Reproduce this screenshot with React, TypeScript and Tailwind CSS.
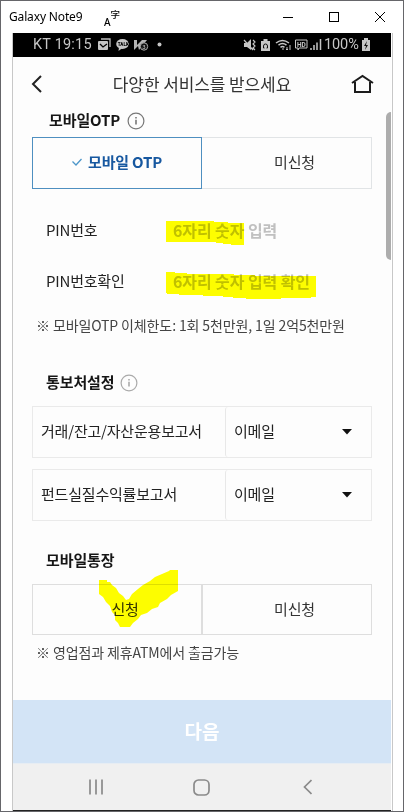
import type { ReactNode } from "react";

const reports = ["거래/잔고/자산운용보고서", "펀드실질수익률보고서"];

function InfoIcon({ className }: { className: string }) {
  return (
    <svg width="18" height="18" viewBox="0 0 18 18" className={className} fill="none">
      <circle cx="9" cy="9" r="7.9" stroke="currentColor" strokeWidth="1.2" />
      <path d="M9 7.8v4.8M9 5v1.5" stroke="currentColor" strokeWidth="1.6" />
    </svg>
  );
}

function TitleBar() {
  return (
    <div className="flex h-8 shrink-0 items-center bg-white pl-2 text-black">
      <span className="w-[95px] whitespace-nowrap font-['Noto_Sans','Noto_Sans_CJK_KR',sans-serif] text-[12px] tracking-[-0.15px]">
        Galaxy Note9
      </span>
      <span className="flex w-5 items-center">
        <span className="mt-[9px] font-['Noto_Sans',sans-serif] text-[10px] font-medium leading-none">A</span>
        <span className="mb-[5px] font-['Noto_Sans_CJK_KR',sans-serif] text-[9.5px] font-medium leading-none">
          字
        </span>
      </span>
      <svg width="105" height="12" viewBox="0 0 105 12" className="ml-auto mr-[16px]" fill="none" stroke="#000">
        <path d="M1 6.5h10" />
        <rect x="47.5" y="1.5" width="9" height="9" />
        <path d="M93 1l10 10M103 1L93 11" />
      </svg>
    </div>
  );
}

function StatusBar() {
  return (
    <div className="flex h-6 shrink-0 items-center bg-black pl-5 font-['Roboto',sans-serif] text-[14.5px] text-[#c6c6c6]">
      <span className="w-[64px] whitespace-nowrap pt-px tracking-[0.2px]">KT 19:15</span>
      <svg width="70" height="16" viewBox="0 0 70 16" fill="none">
        <path d="M4 2h9v8" stroke="#bdbdbd" strokeWidth="1.3" />
        <rect x="1" y="4" width="10" height="9" rx="1" fill="#c6c6c6" />
        <path d="M3 7l3 3 4-3" stroke="#000" strokeWidth="1.3" />
        <ellipse cx="25.5" cy="7" rx="6.3" ry="5" fill="#c6c6c6" />
        <path d="M22 10l-.5 4 4-3z" fill="#c6c6c6" />
        <text x="20.8" y="8.7" fontSize="4.5" fontWeight="900" fill="#000">
          TALK
        </text>
        <path d="M37 3h3v5l5-5h5l-8 10-1-4-4 4z" fill="#b5b5b5" />
        <circle cx="47" cy="9.5" r="3.7" fill="#111" stroke="#aaa" />
        <text x="45.3" y="12" fontSize="6" fill="#ccc">
          3
        </text>
        <circle cx="62.5" cy="7.5" r="2" fill="#c6c6c6" />
      </svg>
      <svg width="80" height="16" viewBox="0 0 80 16" className="ml-auto" fill="none" stroke="#c6c6c6">
        <path d="M1 6h3l4-4v11L4 10H1z" fill="#c6c6c6" stroke="none" />
        <path d="M1 3l9 10M10 3l2 2-2 2 2 2-2 2 2 2" strokeWidth="1.2" />
        <path d="M18 4h2.500V2h4v2H27v10h-9z" fill="#c6c6c6" stroke="none" />
        <path d="M20.500 11V9a2 2 0 014 0v2M20.500 11h1M23.500 11h1" stroke="#111" />
        <path d="M33 6q6.500-5 13 0M35.500 8.200q4-3.200 8 0M37.500 10.300q2-1.600 4 0" strokeWidth="1.5" />
        <path d="M40 11v2M44 10v3M47 8v5M43 12l1 1 1-1" />
        <path d="M52.500 3h11.500v8h-8l-1 2v-2h-2.500z" strokeWidth="1" />
        <text x="54" y="9.5" fontSize="6.5" fontWeight="700" fill="#c6c6c6" stroke="none">
          HD
        </text>
        <path d="M68 11v2M71 8v5M74 5.500v7.500M77.500 2v11" strokeWidth="1.5" />
      </svg>
      <span className="ml-[1px] w-[37px] whitespace-nowrap pt-px tracking-[-0.1px]">100%</span>
      <svg width="10" height="14" viewBox="0 0 10 14" className="mr-[20px]">
        <path d="M1 2h2V0h4v2h2v11H1z" fill="#c6c6c6" />
        <path d="M6 3L3 8h2l-1 4 3-5H5z" fill="#111" />
      </svg>
    </div>
  );
}

function Header() {
  return (
    <header className="flex h-[54px] shrink-0 items-center justify-between pl-[18px] pr-[17px]">
      <svg width="12" height="18" viewBox="0 0 12 18" fill="none" stroke="#222" strokeWidth="2">
        <path d="M10 1L2 9l8 8" />
      </svg>
      <h1 className="ml-[10px] whitespace-nowrap pb-[2px] text-[17px] font-normal tracking-[-0.1px] text-[#333]">
        다양한 서비스를 받으세요
      </h1>
      <svg width="23" height="20" viewBox="0 0 23 20" fill="none" stroke="#1c1c1c" strokeWidth="2">
        <path d="M1 9L11.500 2 22 9M4 8v10h15V8" />
      </svg>
    </header>
  );
}

function Heading({ children }: { children: ReactNode }) {
  return (
    <h2 className="flex h-5 items-center whitespace-nowrap pb-[4px] text-[15px] font-bold tracking-[-0.1px] text-[#161616]">
      {children}
    </h2>
  );
}

function Note({ children }: { children: ReactNode }) {
  return (
    <p className="ml-1 flex h-5 items-center whitespace-nowrap pb-[2px] text-[14px] tracking-[-0.12px] text-[#444]">
      {children}
    </p>
  );
}

function PinRow({ label, children }: { label: string; children: ReactNode }) {
  return (
    <div className="flex h-[51px] items-center whitespace-nowrap pb-[2px] pl-[14px] text-[15px] tracking-[-0.2px]">
      <span className="w-[127px] text-[#222]">{label}</span>
      <span className="relative text-[16px] font-bold tracking-[-0.1px] text-[#c0c0c0]">{children}</span>
    </div>
  );
}

function ReportRow({ label }: { label: string }) {
  return (
    <div className="flex h-[52px] border border-[#eaeaea] text-[15px] tracking-[-0.2px] text-[#222]">
      <div className="flex w-[192px] items-center whitespace-nowrap pb-[3px] pl-2">{label}</div>
      <div className="flex flex-1 items-center justify-between rounded-[3px] border-l border-[#e8e8e8] pl-2 pr-[19px]">
        <span className="pb-[3px]">이메일</span>
        <svg width="10" height="6" viewBox="0 0 10 6">
          <path d="M0 0h10L5 5.500z" fill="#111" />
        </svg>
      </div>
    </div>
  );
}

export default function App() {
  return (
    <div className="flex h-[812px] w-[404px] flex-col overflow-hidden border border-[#66666a] bg-white font-['Noto_Sans_CJK_KR',sans-serif] leading-none">
      <TitleBar />
      <div className="ml-[11px] flex w-[381px] flex-1 flex-col border-x border-[#c8c8c8] pr-px">
        <StatusBar />
        <div className="flex flex-1 flex-col bg-[#fdfdfd]">
          <Header />
          <main className="relative h-[589px] pl-[19px] pr-[19px]">
            <div className="absolute right-0 top-[1px] h-[148px] w-[5px] rounded-l-full bg-[#adadad]" />

            <div className="flex items-center pl-[17px]">
              <Heading>모바일OTP</Heading>
              <InfoIcon className="ml-[7px] text-[#777]" />
            </div>
            <div className="mt-[6px] flex h-[52px] text-[15px] tracking-[-0.2px]">
              <div className="flex w-[170px] items-center justify-center border border-[#4e8fc0] pb-[3px] font-bold text-[#1758a0]">
                <svg width="10" height="8" viewBox="0 0 10 8" className="mr-[6px]" fill="none" stroke="#4c96c9" strokeWidth="1.300">
                  <path d="M.5 3.500L4 7l5.500-6" />
                </svg>
                모바일 OTP
              </div>
              <div className="flex flex-1 items-center justify-center border border-l-0 border-[#e1e4e6] pb-[3px] pl-4 text-[#333]">
                미신청
              </div>
            </div>

            <div className="mt-4">
              <PinRow label="PIN번호">
                6자리 숫자 입력
                <svg width="80" height="26" viewBox="0 0 80 26" className="absolute -left-[7px] -top-[2px] mix-blend-multiply">
                  <path d="M0 1h48v1h14v1h16v22H65v-1h-8v-1h-7v-1H0z" fill="#ff0" />
                </svg>
              </PinRow>
              <PinRow label="PIN번호확인">
                6자리 숫자 입력 확인
                <svg width="152" height="28" viewBox="0 0 152 28" className="absolute -left-[7px] -top-[2px] mix-blend-multiply">
                  <path d="M0 1h9v1h12v1h47v1h21v1h61v21h-5v1h-30v1H80v-1H67v-1H57v-1H37v-1H13v-1H1v-1H0z" fill="#ff0" />
                </svg>
              </PinRow>
            </div>
            <div className="mt-[9px]">
              <Note>※ 모바일OTP 이체한도: 1회 5천만원, 1일 2억5천만원</Note>
            </div>

            <div className="mt-[37px] flex items-center pl-[14px]">
              <Heading>통보처설정</Heading>
              <InfoIcon className="ml-[5px] text-[#aaa]" />
            </div>
            <div className="mt-[13px] flex flex-col gap-[11px]">
              {reports.map((label) => (
                <ReportRow key={label} label={label} />
              ))}
            </div>

            <div className="mt-[30px] pl-[14px]">
              <Heading>모바일통장</Heading>
            </div>
            <div className="relative mt-[13px] flex h-[51px] border border-[#dedede] text-[15px] tracking-[-0.2px] text-[#333]">
              <div className="flex w-[168px] items-center justify-center pb-[2px] pl-4">신청</div>
              <div className="flex flex-1 items-center justify-center border-l-2 border-[#dedede] pb-[2px] pl-[15px]">
                미신청
              </div>
              {/* hand-drawn marker check */}
              <svg width="79" height="59" viewBox="0 0 79 59" className="absolute left-[66px] -top-[15px] mix-blend-multiply">
                <path
                  d="M0 10h8v2h3l2 3 4 3 3 5 4 3 3 4 3-1 3-5 6-5 5-4 7-4 5-4 7-3 7-3 2-2h7v22l-7 4-4 4-7 4-2 4-6 2-5 4-6 2-3 4-5 4-3 4H21l-2-4-3-3v-5l-3-3-2-6-4-4-3-5-4-3z"
                  fill="#ff0"
                />
              </svg>
            </div>
            <div className="mt-2">
              <Note>※ 영업점과 제휴ATM에서 출금가능</Note>
            </div>
          </main>
          <button className="h-[63px] shrink-0 bg-[#d3e4f6] pb-[3px] text-[19px] font-bold text-white">다음</button>
          <nav className="flex h-[47px] shrink-0 items-center justify-between border-t border-[#e7edf3] bg-[#f0f0f0] pl-[75px] pr-[79px] text-[#8a8a8a]">
            <svg width="16" height="16" viewBox="0 0 16 16" stroke="currentColor" strokeWidth="1.700">
              <path d="M2 .5v15M8 .5v15M14 .5v15" />
            </svg>
            <svg width="17" height="17" viewBox="0 0 17 17" className="-ml-1" fill="none" stroke="currentColor" strokeWidth="1.700">
              <rect x="1" y="1" width="15" height="15" rx="4.500" />
            </svg>
            <svg width="9" height="16" viewBox="0 0 9 16" fill="none" stroke="currentColor" strokeWidth="1.700">
              <path d="M8.500 1L1.500 8l7 7" />
            </svg>
          </nav>
          <div className="h-px shrink-0 bg-[#222]" />
        </div>
      </div>
    </div>
  );
}
